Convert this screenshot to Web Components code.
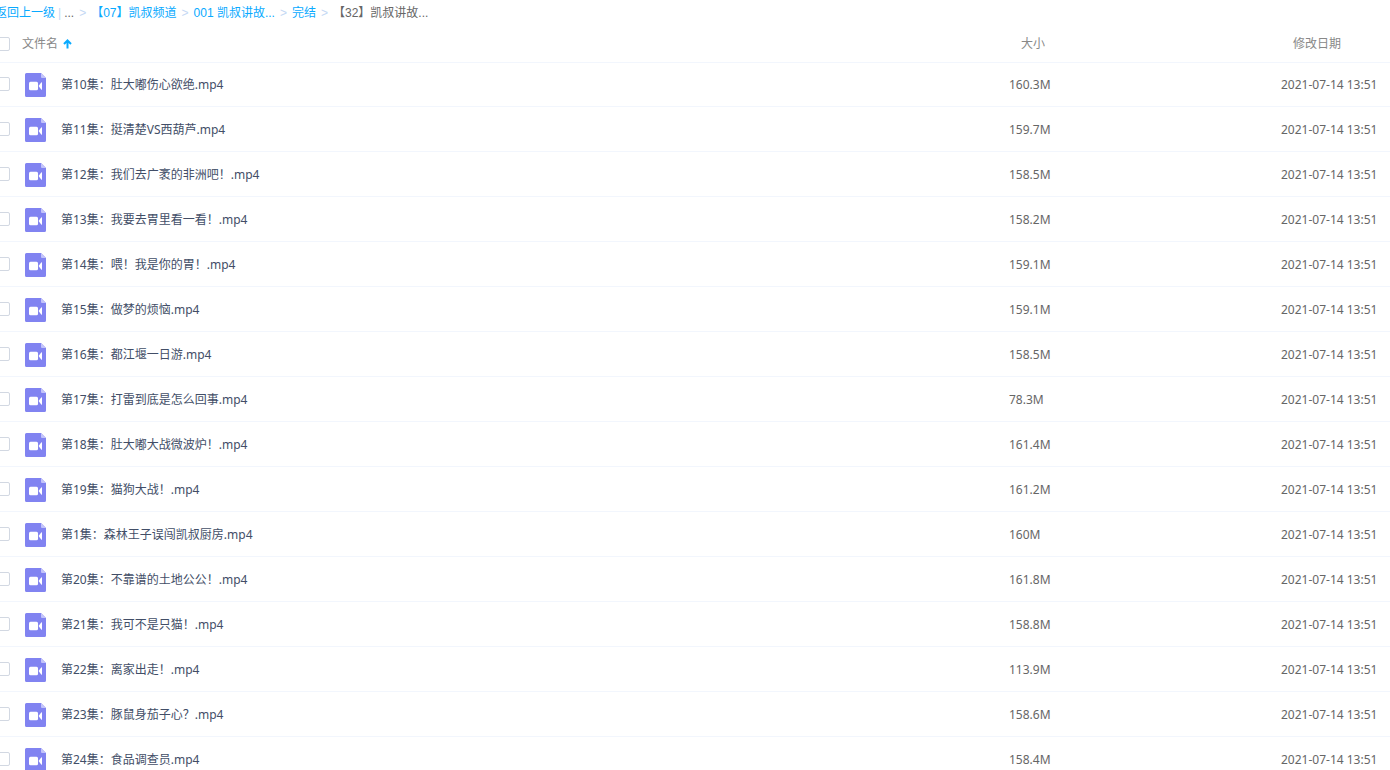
<!DOCTYPE html>
<html lang="zh-CN">
<head>
  <meta charset="UTF-8">
  <meta name="viewport" content="width=device-width, initial-scale=1">
  <title>文件列表</title>
  <style>
    body {
      margin: 0;
      height: 100vh;
      overflow: hidden;
      background: #fff;
      font-family: "Noto Sans", "Noto Sans CJK SC", sans-serif;
      font-size: 12px;
      line-height: 18px;
      color: #666;
    }
  </style>
</head>
<body>
  <file-browser>
    <crumb-trail slot="crumbs">
      <crumb-link>返回上一级</crumb-link>
      <crumb-divider></crumb-divider>
      <span>...</span>
      <crumb-arrow></crumb-arrow>
      <crumb-link>【07】凯叔频道</crumb-link>
      <crumb-arrow></crumb-arrow>
      <crumb-link>001 凯叔讲故...</crumb-link>
      <crumb-arrow></crumb-arrow>
      <crumb-link>完结</crumb-link>
      <crumb-arrow></crumb-arrow>
      <span>【32】凯叔讲故...</span>
    </crumb-trail>
    <file-table></file-table>
  </file-browser>

  <script>
    const files = [
      ["第10集：肚大嘟伤心欲绝.mp4", "160.3M"],
      ["第11集：挺清楚VS西葫芦.mp4", "159.7M"],
      ["第12集：我们去广袤的非洲吧！.mp4", "158.5M"],
      ["第13集：我要去胃里看一看！.mp4", "158.2M"],
      ["第14集：喂！我是你的胃！.mp4", "159.1M"],
      ["第15集：做梦的烦恼.mp4", "159.1M"],
      ["第16集：都江堰一日游.mp4", "158.5M"],
      ["第17集：打雷到底是怎么回事.mp4", "78.3M"],
      ["第18集：肚大嘟大战微波炉！.mp4", "161.4M"],
      ["第19集：猫狗大战！.mp4", "161.2M"],
      ["第1集：森林王子误闯凯叔厨房.mp4", "160M"],
      ["第20集：不靠谱的土地公公！.mp4", "161.8M"],
      ["第21集：我可不是只猫！.mp4", "158.8M"],
      ["第22集：离家出走！.mp4", "113.9M"],
      ["第23集：豚鼠身茄子心？.mp4", "158.6M"],
      ["第24集：食品调查员.mp4", "158.4M"],
    ];
    const modified = "2021-07-14 13:51";

    class FileBrowser extends HTMLElement {
      constructor() {
        super();
        this.attachShadow({ mode: "open" });
      }

      connectedCallback() {
        this.shadowRoot.innerHTML = `
          <style>
            :host {
              display: block;
              margin-left: -5px;
            }
          </style>
          <header><slot name="crumbs"></slot></header>
          <main><slot></slot></main>
        `;
      }
    }

    class CrumbTrail extends HTMLElement {
      constructor() {
        super();
        this.attachShadow({ mode: "open" });
      }

      connectedCallback() {
        this.shadowRoot.innerHTML = `
          <style>
            :host {
              display: block;
              font-family: "Liberation Sans", "Noto Sans CJK SC", sans-serif;
            }
            nav {
              display: flex;
              align-items: center;
              height: 26px;
              gap: 3px;
              white-space: nowrap;
            }
          </style>
          <nav aria-label="路径"><slot></slot></nav>
        `;
      }
    }

    class CrumbLink extends HTMLElement {
      constructor() {
        super();
        this.attachShadow({ mode: "open" });
      }

      connectedCallback() {
        this.shadowRoot.innerHTML = `
          <style>
            :host { display: block; }
            a {
              color: #09aaff;
              text-decoration: none;
            }
            a:hover { text-decoration: underline; }
          </style>
          <a href="#"><slot></slot></a>
        `;
      }
    }

    class CrumbDivider extends HTMLElement {
      constructor() {
        super();
        this.attachShadow({ mode: "open" });
      }

      connectedCallback() {
        this.shadowRoot.innerHTML = `
          <style>
            :host {
              display: block;
              color: #c4d8f4;
            }
          </style>
          |
        `;
      }
    }

    class CrumbArrow extends HTMLElement {
      constructor() {
        super();
        this.attachShadow({ mode: "open" });
      }

      connectedCallback() {
        this.shadowRoot.innerHTML = `
          <style>
            :host {
              display: block;
              padding: 0 2px;
              color: #c4d8f4;
            }
          </style>
          &gt;
        `;
      }
    }

    class VideoIcon extends HTMLElement {
      constructor() {
        super();
        this.attachShadow({ mode: "open" });
      }

      connectedCallback() {
        this.shadowRoot.innerHTML = `
          <style>
            :host {
              display: block;
              flex: none;
              width: 21px;
              height: 24px;
            }
            svg { display: block; }
          </style>
          <svg width="21" height="24" viewBox="0 0 21 24" aria-hidden="true">
            <path fill="#8183f1" d="M1.500 0H16l5 5v17.500a1.500 1.500 0 0 1-1.500 1.500h-18A1.500 1.500 0 0 1 0 22.500v-21A1.500 1.500 0 0 1 1.500 0z"/>
            <path fill="#c3c4fa" d="M16 0l5 5h-4a1 1 0 0 1-1-1z"/>
            <rect fill="#fff" x="4" y="8.700" width="9" height="8.600" rx="1.500"/>
            <path fill="#fff" d="M13.600 13l2.600-3.600q.8-.6.8.3v6.600q0 .9-.8.3z"/>
          </svg>
        `;
      }
    }

    class CheckBox extends HTMLElement {
      constructor() {
        super();
        this.attachShadow({ mode: "open" });
      }

      connectedCallback() {
        const label = this.getAttribute("label") || "";
        this.shadowRoot.innerHTML = `
          <style>
            :host { display: block; }
            input {
              appearance: none;
              display: block;
              box-sizing: border-box;
              width: 14px;
              height: 14px;
              margin: 0 0 0 1px;
              border: 1px solid #d2d8e2;
              border-radius: 2px;
              background: #fff;
            }
            input:checked {
              border-color: #09aaff;
              background: #09aaff;
            }
          </style>
          <input type="checkbox" aria-label="${label}">
        `;
      }
    }

    class FileTable extends HTMLElement {
      constructor() {
        super();
        this.attachShadow({ mode: "open" });
      }

      connectedCallback() {
        this.render();
      }

      render() {
        const rows = files
          .map(
            ([name, size]) => `
            <tr>
              <td><check-box label="选择 ${name}"></check-box></td>
              <td>
                <div class="name">
                  <video-icon></video-icon>
                  <a href="#">${name}</a>
                </div>
              </td>
              <td class="info">${size}</td>
              <td class="info">${modified}</td>
            </tr>`
          )
          .join("");

        this.shadowRoot.innerHTML = `
          <style>
            :host { display: block; }
            table {
              width: 100%;
              table-layout: fixed;
              border-spacing: 0;
            }
            col.check { width: 27px; }
            col.size { width: 272px; }
            col.date { width: 109px; }
            th {
              box-sizing: border-box;
              height: 36px;
              padding: 0;
              color: #888;
              font-weight: normal;
              text-align: left;
            }
            th.indent { padding-left: 12px; }
            th button {
              display: flex;
              align-items: center;
              gap: 5px;
              padding: 0;
              border: 0;
              background: none;
              color: inherit;
              font: inherit;
            }
            td {
              box-sizing: border-box;
              height: 45px;
              padding: 0;
              border-bottom: 1px solid #f2f6fd;
              white-space: nowrap;
            }
            td.info { padding-top: 2px; }
            tbody tr:first-child td { box-shadow: inset 0 1px #f2f6fd; }
            tbody tr:hover { background: #f4fbff; }
            .name {
              display: flex;
              align-items: center;
              gap: 15px;
              padding: 2px 0 0 3px;
            }
            a {
              color: #424e67;
              text-decoration: none;
            }
            a:hover { color: #09aaff; }
          </style>
          <table>
            <colgroup>
              <col class="check"><col><col class="size"><col class="date">
            </colgroup>
            <thead>
              <tr>
                <th><check-box label="全选"></check-box></th>
                <th>
                  <button type="button">文件名
                    <svg width="9" height="10" viewBox="0 0 9 10" aria-hidden="true">
                      <path d="M4.500 9.500V1.500M1 5l3.500-3.500L8 5" fill="none" stroke="#09aaff" stroke-width="2"/>
                    </svg>
                  </button>
                </th>
                <th class="indent">大小</th>
                <th class="indent">修改日期</th>
              </tr>
            </thead>
            <tbody>${rows}</tbody>
          </table>
        `;
      }
    }

    customElements.define("file-browser", FileBrowser);
    customElements.define("crumb-trail", CrumbTrail);
    customElements.define("crumb-link", CrumbLink);
    customElements.define("crumb-divider", CrumbDivider);
    customElements.define("crumb-arrow", CrumbArrow);
    customElements.define("video-icon", VideoIcon);
    customElements.define("check-box", CheckBox);
    customElements.define("file-table", FileTable);
  </script>
</body>
</html>
